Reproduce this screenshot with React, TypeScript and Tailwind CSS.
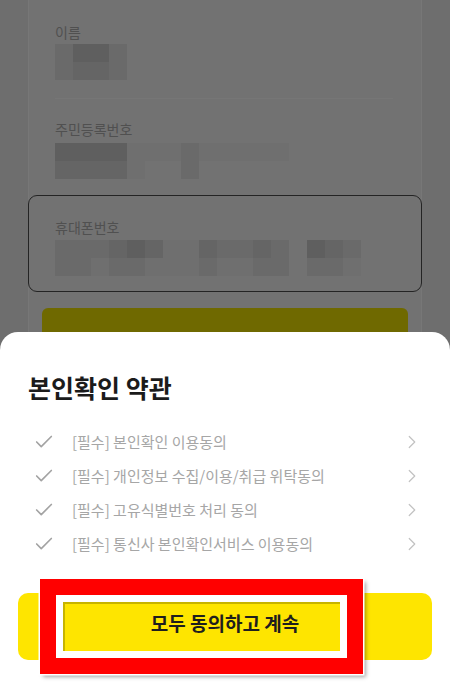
import { Check, ChevronRight } from "lucide-react";

const shade = [
  "bg-transparent",
  "bg-[#6f6f6f]",
  "bg-[#6a6a6a]",
  "bg-[#656565]",
  "bg-[#5f5f5f]",
];

const nameCells = [
  [2, 4, 4, 2],
  [2, 3, 3, 2],
];
const rrnCells = [
  [4, 4, 4, 4, 1, 1, 1, 2, 1, 1, 1, 1, 1],
  [3, 3, 3, 3, 1, 0, 0, 2, 0, 0, 0, 0, 0],
];
const phoneCells = [
  [2, 2, 2, 3, 4, 3, 1, 1, 3, 2, 2, 3, 2, 0, 4, 3, 2],
  [2, 2, 1, 2, 2, 1, 1, 1, 2, 1, 1, 2, 2, 0, 2, 2, 1],
];

const terms = [
  "[필수] 본인확인 이용동의",
  "[필수] 개인정보 수집/이용/취급 위탁동의",
  "[필수] 고유식별번호 처리 동의",
  "[필수] 통신사 본인확인서비스 이용동의",
];

function Mosaic({ rows }: { rows: number[][] }) {
  return (
    <div className="flex flex-col">
      {rows.map((row, i) => (
        <div key={i} className="flex">
          {row.map((s, j) => (
            <div key={j} className={`h-[18px] w-[18px] ${shade[s]}`} />
          ))}
        </div>
      ))}
    </div>
  );
}

export default function App() {
  return (
    <div className="relative h-[687px] w-[450px] overflow-hidden bg-[#6e6e6e] font-['Noto_Sans_CJK_KR','Noto_Sans',sans-serif]">
      {/* dimmed form behind the sheet */}
      <div className="mx-[28px] flex h-full flex-col border-x border-[#777777] bg-[#727272]">
        <div className="px-[26px] pt-[22px]">
          <p className="text-[14px] leading-[20px] text-[#505050]">이름</p>
          <div className="mt-[2px]">
            <Mosaic rows={nameCells} />
          </div>
          <div className="mt-[18px] mr-[2px] h-px bg-[#767676]" />
          <p className="mt-[20px] text-[14px] leading-[20px] text-[#505050]">주민등록번호</p>
          <div className="mt-[4px]">
            <Mosaic rows={rrnCells} />
          </div>
        </div>
        <div className="-mx-px mt-[16px] h-[97px] rounded-[9px] border-[1.5px] border-[#242424] px-[26px] pt-[21px]">
          <p className="text-[14px] leading-[20px] text-[#505050]">휴대폰번호</p>
          <div className="mt-[3px]">
            <Mosaic rows={phoneCells} />
          </div>
        </div>
        <div className="mx-[13px] mt-[16px] h-[60px] rounded-[6px] bg-[#6f6900]" />
      </div>

      {/* bottom sheet */}
      <div className="absolute inset-x-0 bottom-0 h-[355px] rounded-t-[18px] bg-white">
        <h2 className="pl-[28px] pt-[40px] text-[25px] font-bold leading-[30px] text-[#1b1b1b]">본인확인 약관</h2>
        <ul className="mt-[23px]">
          {terms.map((t) => (
            <li key={t} className="flex h-[34px] items-center pl-[33px] pr-[27px]">
              <Check className="h-[22px] w-[22px] text-[#a3a3a3]" strokeWidth={1.8} />
              <span className="ml-[17px] flex-1 text-[15px] text-[#a6a6a6]">{t}</span>
              <ChevronRight className="h-[22px] w-[22px] text-[#c2c2c2]" strokeWidth={1.3} />
            </li>
          ))}
        </ul>
        <div className="relative mx-[18px] mt-[32px] flex h-[67px] items-center justify-center rounded-[10px] bg-[#fee500]">
          {/* annotation frame */}
          <div className="absolute left-[22px] top-[-14px] h-[95px] w-[323px] border-[16px] border-[#ff0000] shadow-[0_0_0_1.5px_#ffffff,3px_3px_4px_rgba(0,0,0,0.35)]">
            <div className="h-full w-full border-[7px] border-white">
              <div className="h-full w-full bg-[#fee500] shadow-[inset_2px_2px_0_#c7b400]" />
            </div>
          </div>
          <span className="relative -mt-[6px] text-[19px] font-semibold text-[#1e1e1e]">모두 동의하고 계속</span>
        </div>
      </div>
    </div>
  );
}
